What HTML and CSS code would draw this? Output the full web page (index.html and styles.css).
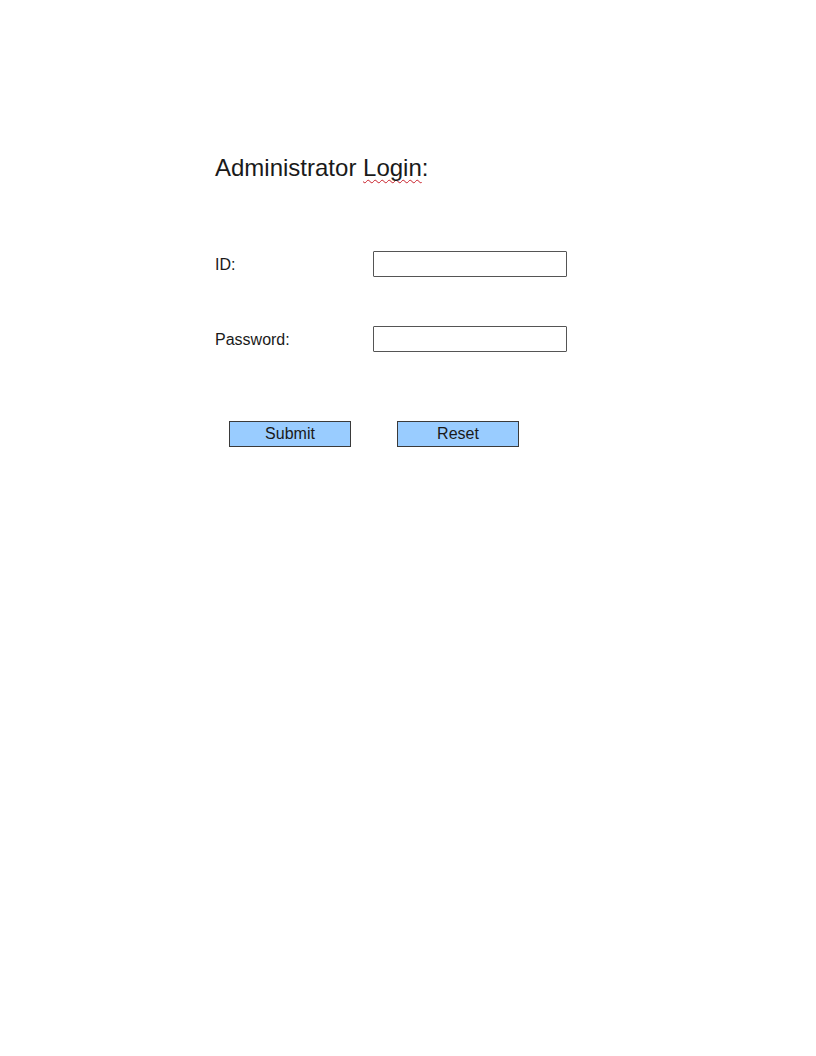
FILE: index.html
```html
<!DOCTYPE html>
<html>
<head>
<meta charset="utf-8">
<link rel="stylesheet" href="styles.css">
</head>
<body>
<div class="page">
  <h1 class="title">Administrator <span class="spell">Login</span>:</h1>
  <div class="form">
    <div class="row">
      <span class="label">ID:</span>
      <span class="field"></span>
    </div>
    <div class="row">
      <span class="label">Password:</span>
      <span class="field"></span>
    </div>
    <div class="buttons">
      <span class="btn">Submit</span>
      <span class="btn">Reset</span>
    </div>
  </div>
</div>
</body>
</html>
```
FILE: styles.css
```css
html, body {
  margin: 0;
  padding: 0;
  background: #fff;
}
.page {
  padding: 154px 0 0 215px;
  font-family: "Liberation Sans", Arial, sans-serif;
  color: #1a1a1a;
}
.title {
  margin: 0;
  font-size: 24px;
  font-weight: normal;
  line-height: 27px;
}
.spell {
  text-decoration: underline wavy #c8202a;
  text-decoration-thickness: 1px;
  text-decoration-skip-ink: none;
  text-underline-offset: 3px;
}
.form {
  margin-top: 70px;
  display: flex;
  flex-direction: column;
  gap: 49px;
}
.row {
  display: flex;
  align-items: center;
  height: 26px;
}
.label {
  width: 158px;
  font-size: 16px;
  padding-top: 2px;
}
.field {
  box-sizing: border-box;
  width: 194px;
  height: 26px;
  border: 1px solid #555;
  border-radius: 1px;
  background: #fff;
}
.buttons {
  display: flex;
  gap: 46px;
  margin-top: 20px;
  padding-left: 14px;
}
.btn {
  box-sizing: border-box;
  width: 122px;
  height: 26px;
  border: 1px solid #3a3a3a;
  background: #99ccff;
  font-size: 16px;
  line-height: 24px;
  text-align: center;
  color: #1a1a1a;
}
```
